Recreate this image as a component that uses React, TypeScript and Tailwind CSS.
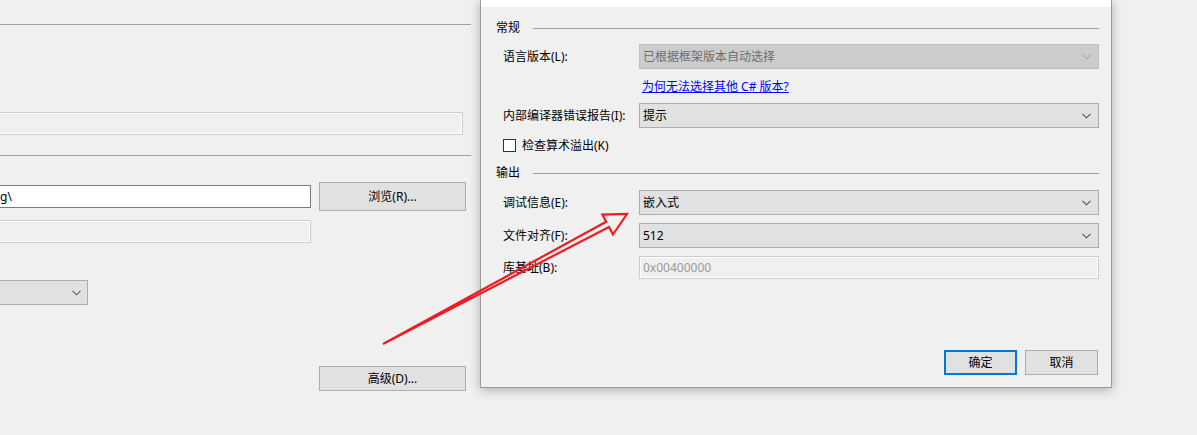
import React from "react";

const FONT = "font-['Segoe_UI','Noto_Sans','Noto_Sans_CJK_SC',sans-serif]";

function Chevron({ color = "#5a5a5a" }: { color?: string }) {
  return (
    <svg width="9" height="6" viewBox="0 0 9 6" className="shrink-0">
      <polyline points="0.5,0.8 4.5,4.8 8.5,0.8" fill="none" stroke={color} strokeWidth="1.1" />
    </svg>
  );
}

function Combo({ text, disabled = false, className = "" }: { text: string; disabled?: boolean; className?: string }) {
  return (
    <div
      className={`flex h-[25px] items-center justify-between border pl-[3px] pr-[7px] ${
        disabled ? "border-[#bfbfbf] bg-[#cccccc] text-[#6d6d6d]" : "border-[#adadad] bg-[#e1e1e1] text-black"
      } ${className}`}
    >
      <span className="whitespace-nowrap">{text}</span>
      <Chevron color={disabled ? "#a8a8a8" : "#505050"} />
    </div>
  );
}

function DisabledBox({ text = "", className = "" }: { text?: string; className?: string }) {
  return (
    <div
      className={`flex h-[23px] items-center border border-[#cccccc] bg-[#f0f0f0] pl-[3px] text-[#9a9a9a] shadow-[inset_0_0_0_1px_#ffffff] ${className}`}
    >
      {text}
    </div>
  );
}

function Button({ text, primary = false, className = "" }: { text: string; primary?: boolean; className?: string }) {
  return (
    <div
      className={`flex items-center justify-center bg-[#e1e1e1] text-black ${
        primary ? "border-2 border-[#0078d7]" : "border border-[#adadad]"
      } ${className}`}
    >
      {text}
    </div>
  );
}

function Row({ label, children, className = "" }: { label: string; children: React.ReactNode; className?: string }) {
  return (
    <div className={`flex items-center pl-[22px] pr-[12px] ${className}`}>
      <div className="w-[136px] shrink-0 whitespace-nowrap">{label}</div>
      <div className="flex-1">{children}</div>
    </div>
  );
}

function Header({ text, className = "" }: { text: string; className?: string }) {
  return (
    <div className={`flex h-[16px] items-center pl-[15px] pr-[12px] ${className}`}>
      <span className="whitespace-nowrap leading-[16px]">{text}</span>
      <div className="ml-[13px] h-px flex-1 bg-[#a0a0a0]" />
    </div>
  );
}

export default function App() {
  return (
    <div className={`relative h-[435px] w-[1197px] overflow-hidden bg-[#f0f0f0] text-[12px] text-black ${FONT}`}>
      {/* Background property page (cropped at the left edge) */}
      <div className="flex w-[480px] flex-col">
        <div className="h-[24px]" />
        <div className="h-px w-[471px] bg-[#a0a0a0]" />
        <DisabledBox className="-ml-[6px] mt-[87px] w-[469px]" />
        <div className="mt-[20px] h-px w-[471px] bg-[#a0a0a0]" />
        <div className="mt-[26px] flex items-start">
          <div className="-ml-[6px] mt-[3px] flex h-[23px] w-[317px] items-center border border-[#7a7a7a] bg-white pl-[5px]">
            <span>g\</span>
          </div>
          <Button text="浏览(R)..." className="ml-[8px] h-[29px] w-[147px]" />
        </div>
        <DisabledBox className="-ml-[6px] mt-[9px] w-[317px]" />
        <div className="-ml-[6px] mt-[37px] flex h-[25px] w-[94px] items-center justify-end border border-[#adadad] bg-[#e1e1e1] pr-[6px]">
          <Chevron />
        </div>
        <Button text="高级(D)..." className="ml-[319px] mt-[61px] h-[25px] w-[147px]" />
      </div>

      {/* Dialog window */}
      <div className="absolute left-[480px] top-0 flex h-[388px] w-[632px] flex-col border-x border-b border-[#9b9b9b] bg-[#f0f0f0] shadow-[0_2px_10px_rgba(0,0,0,0.28)]">
        <div className="h-[7px] bg-white" />
        <Header text="常规" className="mt-[13px]" />
        <Row label="语言版本(L):" className="mt-[8px]">
          <Combo text="已根据框架版本自动选择" disabled />
        </Row>
        <div className="mt-[10px] flex h-[16px] items-center pl-[161px]">
          <span className="leading-[16px] text-[#0000ff] underline">为何无法选择其他 C# 版本?</span>
        </div>
        <Row label="内部编译器错误报告(I):" className="mt-[8px]">
          <Combo text="提示" />
        </Row>
        <div className="mt-[11px] flex h-[13px] items-center pl-[22px]">
          <div className="h-[13px] w-[13px] border border-[#333333] bg-white" />
          <span className="ml-[6px] whitespace-nowrap leading-[13px]">检查算术溢出(K)</span>
        </div>
        <Header text="输出" className="mt-[13px]" />
        <Row label="调试信息(E):" className="mt-[9px]">
          <Combo text="嵌入式" />
        </Row>
        <Row label="文件对齐(F):" className="mt-[8px]">
          <Combo text="512" />
        </Row>
        <Row label="库基址(B):" className="mt-[8px]">
          <DisabledBox text="0x00400000" />
        </Row>
        <div className="mt-[71px] flex justify-end gap-[8px] pr-[13px]">
          <Button text="确定" primary className="h-[25px] w-[73px]" />
          <Button text="取消" className="h-[25px] w-[73px]" />
        </div>
      </div>

      {/* Red annotation arrow */}
      <svg className="pointer-events-none absolute left-0 top-0" width="1197" height="435" viewBox="0 0 1197 435">
        <polygon
          points="383,344 609,227 613,234.5 627,214 602.4,214.6 606.2,221.7"
          fill="none"
          stroke="#ec1c24"
          strokeWidth="2.2"
          strokeLinejoin="miter"
        />
      </svg>
    </div>
  );
}
